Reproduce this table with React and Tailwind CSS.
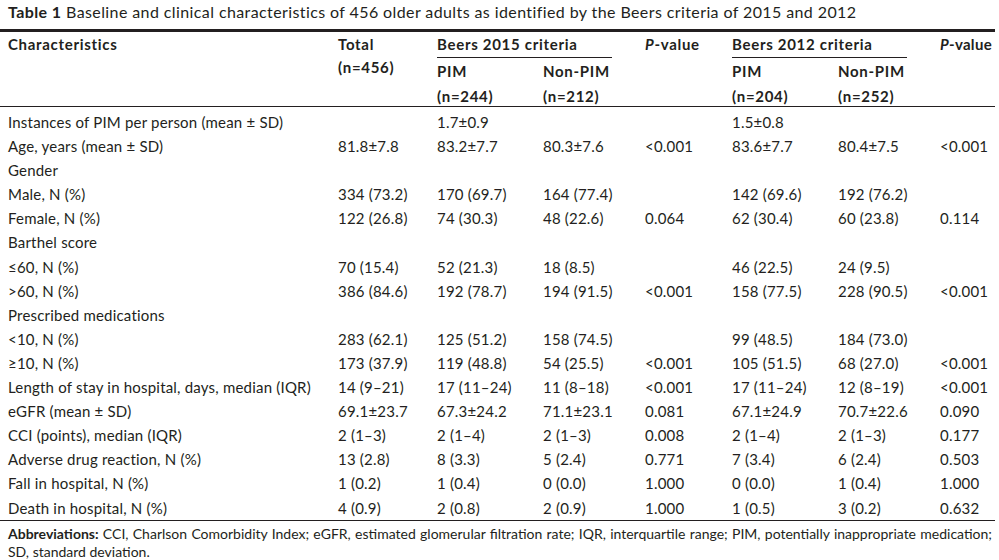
const rows = [
  ['Instances of PIM per person (mean ± SD)', '', '1.7±0.9', '', '', '1.5±0.8', '', ''],
  ['Age, years (mean ± SD)', '81.8±7.8', '83.2±7.7', '80.3±7.6', '<0.001', '83.6±7.7', '80.4±7.5', '<0.001'],
  ['Gender'],
  ['Male, N (%)', '334 (73.2)', '170 (69.7)', '164 (77.4)', '', '142 (69.6)', '192 (76.2)', ''],
  ['Female, N (%)', '122 (26.8)', '74 (30.3)', '48 (22.6)', '0.064', '62 (30.4)', '60 (23.8)', '0.114'],
  ['Barthel score'],
  ['≤60, N (%)', '70 (15.4)', '52 (21.3)', '18 (8.5)', '', '46 (22.5)', '24 (9.5)', ''],
  ['>60, N (%)', '386 (84.6)', '192 (78.7)', '194 (91.5)', '<0.001', '158 (77.5)', '228 (90.5)', '<0.001'],
  ['Prescribed medications'],
  ['<10, N (%)', '283 (62.1)', '125 (51.2)', '158 (74.5)', '', '99 (48.5)', '184 (73.0)', ''],
  ['≥10, N (%)', '173 (37.9)', '119 (48.8)', '54 (25.5)', '<0.001', '105 (51.5)', '68 (27.0)', '<0.001'],
  ['Length of stay in hospital, days, median (IQR)', '14 (9–21)', '17 (11–24)', '11 (8–18)', '<0.001', '17 (11–24)', '12 (8–19)', '<0.001'],
  ['eGFR (mean ± SD)', '69.1±23.7', '67.3±24.2', '71.1±23.1', '0.081', '67.1±24.9', '70.7±22.6', '0.090'],
  ['CCI (points), median (IQR)', '2 (1–3)', '2 (1–4)', '2 (1–3)', '0.008', '2 (1–4)', '2 (1–3)', '0.177'],
  ['Adverse drug reaction, N (%)', '13 (2.8)', '8 (3.3)', '5 (2.4)', '0.771', '7 (3.4)', '6 (2.4)', '0.503'],
  ['Fall in hospital, N (%)', '1 (0.2)', '1 (0.4)', '0 (0.0)', '1.000', '0 (0.0)', '1 (0.4)', '1.000'],
  ['Death in hospital, N (%)', '4 (0.9)', '2 (0.8)', '2 (0.9)', '1.000', '1 (0.5)', '3 (0.2)', '0.632'],
];

const cols = 'grid grid-cols-[330px_99px_106px_102px_87px_106px_102px_1fr]';

function Group({ label, a, b }) {
  return (
    <div className="col-span-2 flex flex-col">
      <div className="w-[175px] h-[26px] leading-[24px] border-b border-[#231f20] whitespace-nowrap">{label}</div>
      <div className="grid grid-cols-[106px_102px] leading-[25px] pt-[1px]">
        <div>PIM</div>
        <div>Non-PIM</div>
        <div>{a}</div>
        <div>{b}</div>
      </div>
    </div>
  );
}

export default function App() {
  return (
    <div className="w-[999px] h-[560px] bg-white text-[#231f20] font-['Lato',sans-serif] overflow-hidden">
      <div className="w-[995px]">
        <div className="h-[29px] pl-2 pt-[2px] text-[16px] leading-[20px] tracking-[0.4px] whitespace-nowrap">
          <span className="font-bold">Table 1</span> Baseline and clinical characteristics of 456 older adults as identified by the Beers criteria of 2015 and 2012
        </div>
        <div className="h-[3px] bg-[#231f20]" />
        <div className={`${cols} pl-2 h-[75px] border-b border-[#231f20] text-[15px] font-bold tracking-[0.7px]`}>
          <div className="leading-[24px]">Characteristics</div>
          <div className="leading-[23px] pt-[1px]">
            <div>Total</div>
            <div>(n=456)</div>
          </div>
          <Group label="Beers 2015 criteria" a="(n=244)" b="(n=212)" />
          <div className="leading-[24px]"><i>P</i>-value</div>
          <Group label="Beers 2012 criteria" a="(n=204)" b="(n=252)" />
          <div className="leading-[24px] whitespace-nowrap tracking-[0.3px]"><i>P</i>-value</div>
        </div>
        <div className="pt-[3px] border-b border-[#231f20] text-[15px] tracking-[0.2px]">
          {rows.map((r, i) => (
            <div key={i} className={`${cols} pl-2 h-[24.1px] leading-[24px]`}>
              {Array.from({ length: 8 }).map((_, j) => (
                <div key={j} className="whitespace-nowrap">{r[j] || ''}</div>
              ))}
            </div>
          ))}
        </div>
        <div className="pl-2 pr-[3px] pt-[4px] text-[14px] leading-[18px]">
          <p className="text-justify [text-align-last:justify]">
            <span className="font-bold">Abbreviations:</span> CCI, Charlson Comorbidity Index; eGFR, estimated glomerular filtration rate; IQR, interquartile range; PIM, potentially inappropriate medication;
          </p>
          <p>SD, standard deviation.</p>
        </div>
      </div>
    </div>
  );
}
